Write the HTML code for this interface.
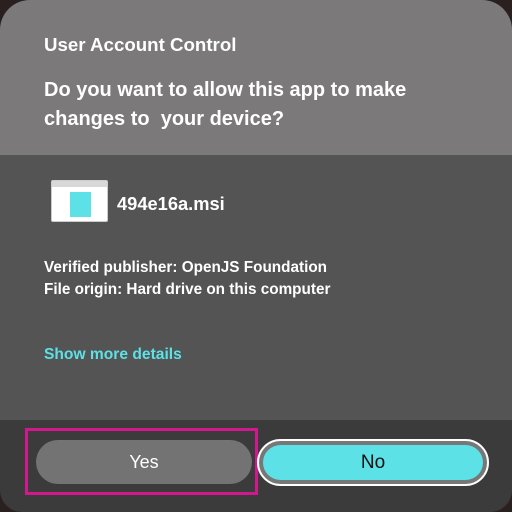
<!DOCTYPE html>
<html><head><style>
*{margin:0;padding:0;box-sizing:border-box}
body{width:512px;height:512px;background:#2a2020;position:relative;overflow:hidden;font-family:"Liberation Sans",sans-serif;color:#fff}
.dlg{position:absolute;left:0;top:0;width:512px;height:512px;border-radius:30px 30px 22px 22px;overflow:hidden;background:#3b3b3b}
.top{position:absolute;left:0;top:0;width:512px;height:155px;background:#7b797a}
.mid{position:absolute;left:0;top:155px;width:512px;height:265px;background:#545454}
.t{position:absolute;left:44px;font-weight:bold;white-space:nowrap}
</style></head><body>
<div class="dlg">
<div class="top"></div><div class="mid"></div>
<div class="t" style="top:34px;font-size:18.7px">User Account Control</div>
<div class="t" style="top:76px;font-size:20px;line-height:29px">Do you want to allow this app to make<br>changes to&nbsp; your device?</div>
<div style="position:absolute;left:51px;top:180px;width:57px;height:42px;background:#fff;border-radius:2px;border:1px solid #ccc">
<div style="height:6px;background:#d8d8d8"></div>
<div style="position:absolute;left:18px;top:11px;width:21px;height:25px;background:#5ce1e6"></div></div>
<div class="t" style="left:117px;top:193px;font-size:18.3px">494e16a.msi</div>
<div class="t" style="top:257px;font-size:15.3px;line-height:22px">Verified publisher: OpenJS Foundation<br>File origin: Hard drive on this computer</div>
<div class="t" style="top:346px;font-size:15.6px;color:#5ce1e6">Show more details</div>
<div style="position:absolute;left:25px;top:428px;width:233px;height:67px;border:3px solid #d0188f"></div>
<div style="position:absolute;left:36px;top:440px;width:216px;height:44px;background:#737373;border-radius:22px;text-align:center;line-height:44px;font-size:18px">Yes</div>
<div style="position:absolute;left:257px;top:439px;width:232px;height:47px;border:2px solid #fff;border-radius:24px;background:#777">
<div style="position:absolute;left:4px;top:4px;right:4px;bottom:4px;background:#5ce1e6;border-radius:18px;color:#111;text-align:center;line-height:35px;font-size:19px">No</div></div>
</div>
</body></html>
